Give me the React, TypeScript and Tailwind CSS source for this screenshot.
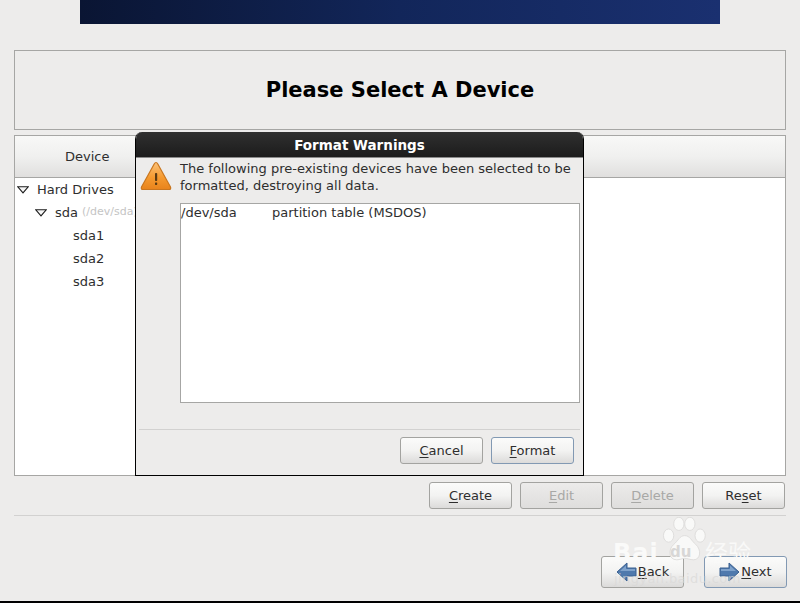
const fontBody = 'font-["DejaVu_Sans",sans-serif]';

function GtkButton({
  label,
  mnemonic,
  disabled,
  focused,
  className,
  icon,
}: {
  label: string;
  mnemonic: number;
  disabled?: boolean;
  focused?: boolean;
  className?: string;
  icon?: React.ReactNode;
}) {
  const before = label.slice(0, mnemonic);
  const letter = label[mnemonic];
  const after = label.slice(mnemonic + 1);

  return (
    <div
      className={`flex items-center justify-center rounded-[3px] border bg-gradient-to-b text-[13px] ${
        focused ? 'border-[#8299b3]' : 'border-[#a3a3a0]'
      } ${
        disabled
          ? 'from-[#ecebea] to-[#dfdedd] text-[#a8a8a6]'
          : 'from-[#fbfbfa] via-[#f3f3f2] to-[#dcdbda] text-[#2e2e2e]'
      } ${className ?? ''}`}
    >
      {icon}
      <span>
        {before}
        <span className="underline underline-offset-2">{letter}</span>
        {after}
      </span>
    </div>
  );
}

function Caret({ className }: { className?: string }) {
  return (
    <svg width="12" height="8" viewBox="0 0 12 8" className={className}>
      <path d="M0.8 0.8 H11.2 L6 6.8 Z" fill="#f6f6f6" stroke="#1c1c1c" strokeWidth="1.1" />
    </svg>
  );
}

function WarningIcon() {
  return (
    <svg width="32" height="32" viewBox="0 0 32 32" className="shrink-0">
      <defs>
        <linearGradient id="warn" x1="0" y1="0" x2="0" y2="1">
          <stop offset="0" stopColor="#fbc27a" />
          <stop offset="0.55" stopColor="#f59a2f" />
          <stop offset="1" stopColor="#e8831c" />
        </linearGradient>
      </defs>
      <path
        d="M16 2.5 Q17 2.5 17.8 4 L30.5 27 Q31.3 29.5 29 29.5 H3 Q0.7 29.5 1.5 27 L14.2 4 Q15 2.5 16 2.5 Z"
        fill="url(#warn)"
        stroke="#c9761f"
        strokeWidth="1.2"
      />
      <rect x="15" y="13" width="2.2" height="8" rx="0.8" fill="#5a3a12" />
      <rect x="15" y="22.5" width="2.2" height="2.4" rx="0.6" fill="#5a3a12" />
    </svg>
  );
}

function NavArrow({ flip }: { flip?: boolean }) {
  return (
    <svg
      width="21"
      height="20"
      viewBox="0 0 21 20"
      className={`shrink-0 ${flip ? '-scale-x-100' : ''}`}
    >
      <path d="M1 6 H10 V1 L20 10 L10 19 V14 H1 Z" fill="#4f79ad" stroke="#3b6090" strokeWidth="1" />
      <path d="M2 7 H11 V3.5 L17 9 H2 Z" fill="#7fa2cb" />
    </svg>
  );
}

function BaiduWatermark() {
  return (
    <div className="pointer-events-none absolute left-[610px] top-[515px] h-[85px] w-[150px]">
      <svg width="44" height="46" viewBox="0 0 60 62" className="absolute left-[52px] top-[2px]">
        <g fill="#f9f9f8" stroke="#dcdbda" strokeWidth="1.2">
          <ellipse cx="9" cy="25" rx="7" ry="9" />
          <ellipse cx="23" cy="9" rx="7" ry="9" />
          <ellipse cx="38" cy="9" rx="7" ry="9" />
          <ellipse cx="52" cy="25" rx="7" ry="9" />
          <path d="M31 25 C24 25 22 32 16 37 C8 44 9 58 20 58 C25 58 27 56 31 56 C35 56 38 58 43 58 C53 58 54 44 46 37 C40 32 38 25 31 25 Z" />
        </g>
      </svg>
      <span className={`absolute left-[3px] top-[25px] text-[24px] font-bold leading-[26px] tracking-[1px] text-[#fafaf9] ${fontBody}`}>
        Bai
      </span>
      <span className={`absolute left-[60px] top-[27px] text-[15px] font-bold leading-[20px] text-[#d8d7d6] ${fontBody}`}>
        du
      </span>
      <span className='absolute left-[95px] top-[22px] font-["Noto_Sans_CJK_SC",sans-serif] text-[23px] leading-[28px] text-[#f9f9f8]'>
        经验
      </span>
      <span className={`absolute left-[4px] top-[56px] text-[13px] leading-[16px] tracking-[0.4px] text-[#d9d8d7]/70 ${fontBody}`}>
        jingyan.baidu.com
      </span>
    </div>
  );
}

export default function App() {
  return (
    <div className={`relative flex h-[603px] w-[800px] flex-col overflow-hidden bg-[#edeceb] text-[#2e2e2e] ${fontBody}`}>
      <div className="mx-auto h-[24px] w-[640px] shrink-0 bg-gradient-to-r from-[#0a1533] via-[#12265a] to-[#1a3070]" />

      <div className="mx-[14px] mt-[26px] flex h-[80px] shrink-0 items-center justify-center border border-[#a6a6a4] pt-px">
        <h1 className="text-[21px] font-bold text-black">Please Select A Device</h1>
      </div>

      <div className="mx-[14px] mt-[5px] flex h-[341px] shrink-0 flex-col border border-[#a6a6a4] bg-white">
        <div className="flex h-[42px] shrink-0 items-center border-b border-[#a6a6a4] bg-gradient-to-b from-[#f8f8f7] via-[#f0f0ef] to-[#e0dfde]">
          <span className="ml-[50px] text-[13px]">Device</span>
        </div>
        <div className="flex flex-col text-[13px]">
          <div className="flex h-[23px] items-center">
            <Caret className="ml-[2px]" />
            <span className="ml-[8px]">Hard Drives</span>
          </div>
          <div className="flex h-[23px] items-center whitespace-nowrap">
            <Caret className="ml-[20px]" />
            <span className="ml-[8px]">sda</span>
            <span className="ml-[4px] text-[11px] text-[#c4c4c4]">(/dev/sda)</span>
          </div>
          <div className="flex h-[23px] items-center pl-[58px]">sda1</div>
          <div className="flex h-[23px] items-center pl-[58px]">sda2</div>
          <div className="flex h-[23px] items-center pl-[58px]">sda3</div>
        </div>
      </div>

      <div className="mx-[15px] mt-[6px] flex shrink-0 justify-end gap-[8px]">
        <GtkButton label="Create" mnemonic={0} className="h-[27px] w-[83px]" />
        <GtkButton label="Edit" mnemonic={0} disabled className="h-[27px] w-[83px]" />
        <GtkButton label="Delete" mnemonic={0} disabled className="h-[27px] w-[83px]" />
        <GtkButton label="Reset" mnemonic={2} className="h-[27px] w-[83px]" />
      </div>

      <div className="mx-[14px] mt-[6px] h-px shrink-0 bg-[#d2d1d0]" />

      <div className="mr-[13px] mt-[40px] flex shrink-0 justify-end gap-[20px]">
        <GtkButton
          label="Back"
          mnemonic={0}
          className="h-[32px] w-[83px] gap-px"
          icon={<NavArrow flip />}
        />
        <GtkButton
          label="Next"
          mnemonic={0}
          focused
          className="h-[32px] w-[83px] gap-px"
          icon={<NavArrow />}
        />
      </div>

      <div className="absolute bottom-0 left-0 h-[2px] w-full bg-black" />

      {/* modal dialog */}
      <div className="absolute left-[135px] top-[132px] flex h-[344px] w-[449px] flex-col overflow-hidden rounded-t-[7px] border border-t-0 border-black bg-[#edeceb]">
        <div className="flex h-[25px] shrink-0 items-center justify-center bg-gradient-to-b from-[#303030] to-[#1c1c1c] pt-[2px] text-[13.5px] font-bold text-white">
          Format Warnings
        </div>
        <div className="h-px shrink-0 bg-[#8a8a8a]" />
        <div className="flex shrink-0 pl-[4px] pr-[4px] pt-[2px]">
          <WarningIcon />
          <p className="ml-[8px] text-[13px] leading-[17px]">
            The following pre-existing devices have been selected to be formatted, destroying all data.
          </p>
        </div>
        <div className="ml-[44px] mt-[9px] flex h-[200px] w-[400px] shrink-0 items-start border border-[#a6a6a4] bg-white text-[13px] leading-[17px]">
          <span className="w-[91px]">/dev/sda</span>
          <span>partition table (MSDOS)</span>
        </div>
        <div className="mx-[3px] mt-[26px] h-px shrink-0 bg-[#d2d1d0]" />
        <div className="mr-[9px] mt-[7px] flex justify-end gap-[8px]">
          <GtkButton label="Cancel" mnemonic={0} className="h-[27px] w-[83px]" />
          <GtkButton label="Format" mnemonic={0} focused className="h-[27px] w-[83px]" />
        </div>
      </div>

      <BaiduWatermark />
    </div>
  );
}
